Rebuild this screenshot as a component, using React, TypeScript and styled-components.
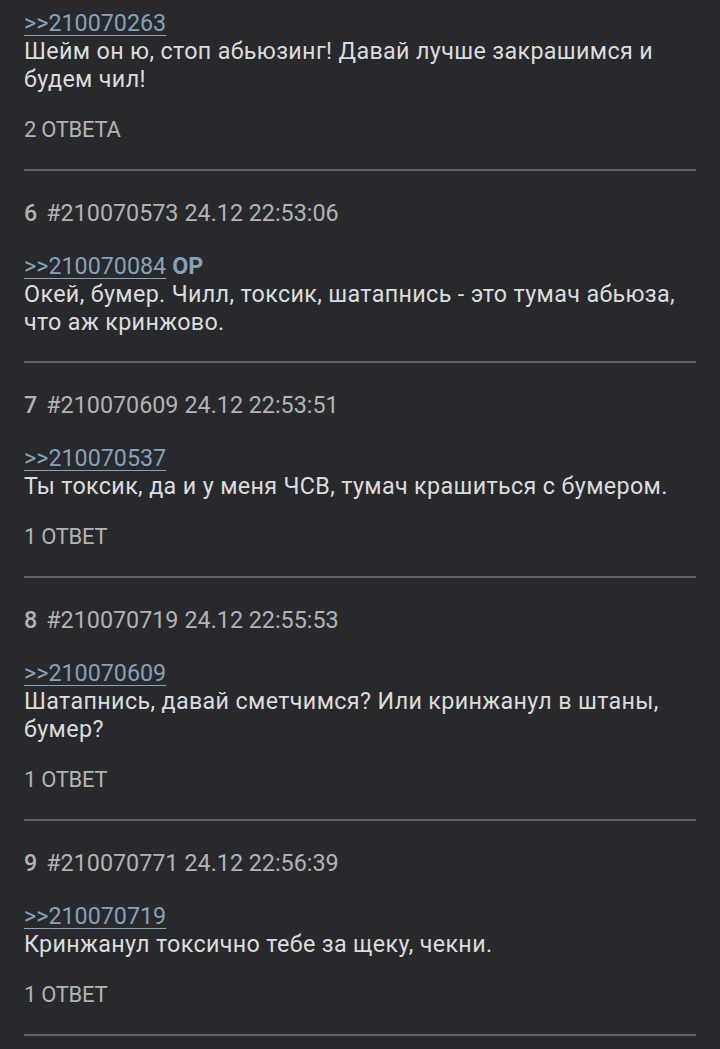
import React from 'react';
import styled, { createGlobalStyle } from 'styled-components';

const GlobalStyle = createGlobalStyle`
  html, body {
    margin: 0;
    padding: 0;
    background: #28292d;
  }
  body {
    font-family: Roboto, 'Noto Sans', sans-serif;
  }
`;

const Thread = styled.div`
  width: 720px;
  min-height: 1049px;
  background: #28292d;
  overflow: hidden;
`;

const Post = styled.div<{ $first?: boolean }>`
  margin: 0 24px;
  padding: ${(p) => (p.$first ? '9px' : '28px')} 0 25px;
  border-bottom: 2px solid #626368;
  font-size: 23.3px;
  line-height: 28px;
`;

const Header = styled.div`
  display: flex;
  align-items: baseline;
  color: #b3b3b5;
  margin-bottom: 25px;
  white-space: nowrap;
`;

const Num = styled.span`
  font-weight: 500;
  margin-right: 9px;
`;

const Meta = styled.span`
  margin-right: 6px;
`;

const Body = styled.div`
  color: #dcdcdd;
`;

const Text = styled.div`
  letter-spacing: 0.35px;
`;

const Link = styled.a`
  color: #86a1bb;
  text-decoration: underline;
  text-decoration-thickness: 1px;
  text-underline-offset: 4px;
`;

const Op = styled.span`
  color: #86a1bb;
  font-weight: 700;
  margin-left: 6px;
`;

const Replies = styled.div`
  margin-top: 23px;
  color: #b3b3b5;
  font-size: 22px;
  letter-spacing: -0.3px;
  text-transform: uppercase;
`;

type PostData = {
  num?: number;
  id?: string;
  date?: string;
  reply: string;
  op?: boolean;
  text: string;
  replies?: string;
};

const posts: PostData[] = [
  {
    reply: '210070263',
    text: 'Шейм он ю, стоп абьюзинг! Давай лучше закрашимся и будем чил!',
    replies: '2 ответа',
  },
  {
    num: 6,
    id: '210070573',
    date: '24.12 22:53:06',
    reply: '210070084',
    op: true,
    text: 'Окей, бумер. Чилл, токсик, шатапнись - это тумач абьюза, что аж кринжово.',
  },
  {
    num: 7,
    id: '210070609',
    date: '24.12 22:53:51',
    reply: '210070537',
    text: 'Ты токсик, да и у меня ЧСВ, тумач крашиться с бумером.',
    replies: '1 ответ',
  },
  {
    num: 8,
    id: '210070719',
    date: '24.12 22:55:53',
    reply: '210070609',
    text: 'Шатапнись, давай сметчимся? Или кринжанул в штаны, бумер?',
    replies: '1 ответ',
  },
  {
    num: 9,
    id: '210070771',
    date: '24.12 22:56:39',
    reply: '210070719',
    text: 'Кринжанул токсично тебе за щеку, чекни.',
    replies: '1 ответ',
  },
];

export default function App() {
  return (
    <>
      <GlobalStyle />
      <Thread>
        {posts.map((p, i) => (
          <Post key={i} $first={!p.num}>
            {p.num && (
              <Header>
                <Num>{p.num}</Num>
                <Meta>#{p.id}</Meta>
                <span>{p.date}</span>
              </Header>
            )}
            <Body>
              <div>
                <Link>&gt;&gt;{p.reply}</Link>
                {p.op && <Op>OP</Op>}
              </div>
              <Text>{p.text}</Text>
            </Body>
            {p.replies && <Replies>{p.replies}</Replies>}
          </Post>
        ))}
      </Thread>
    </>
  );
}
